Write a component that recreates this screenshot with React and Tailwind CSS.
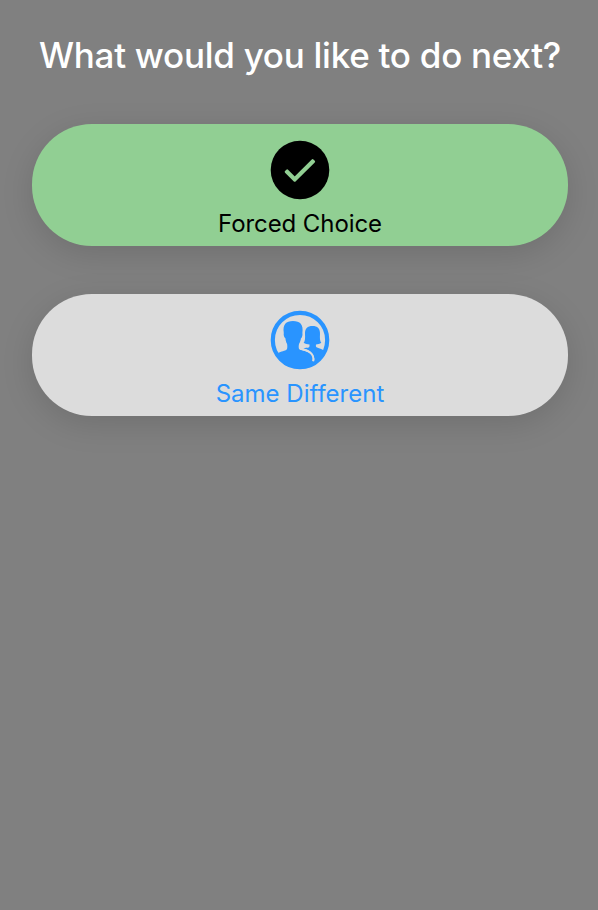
function CheckIcon() {
  return (
    <svg className="block h-[60px] w-[60px]" viewBox="0 0 60 60" fill="none">
      <circle cx="30" cy="30" r="29.3" fill="currentColor" />
      <path
        d="M17.2 30.6L24.7 38L42.6 20.3L43.9 21.6L24.7 40.6L15.9 31.9Z"
        fill="#91cf93"
        stroke="#91cf93"
        strokeWidth="2.4"
        strokeLinejoin="round"
      />
    </svg>
  );
}

function PeopleIcon() {
  return (
    <svg className="block h-[60px] w-[60px]" viewBox="0 0 60 60" fill="none">
      <circle cx="30" cy="30" r="27.2" stroke="currentColor" strokeWidth="4.2" />
      <path
        fill="currentColor"
        d="M8 43C11 41.2 15.2 40.8 16.7 39.4C17.5 38.5 17.4 36 17.1 34C16.1 32.4 15.6 30.6 15.5 28.6C14.3 27.6 13.3 25 13.8 23C12.5 14.5 16 11 23 11C30 11 33.7 14.5 32.4 23C32.8 25.3 32 27.7 30.9 28.6C30.7 30.6 30 32.4 29 34C28.6 36 28.5 38.4 29.3 39.2C32 40.6 38 41.2 41 44C43.3 46 44 49 43.8 51.8L41 57L30 59L15 55Z"
      />
      <path
        fill="currentColor"
        d="M33.2 38.5C35 37.6 38 38 39 37.2C39.5 36.6 39.6 35.6 39.5 34.5C37.5 34.5 35.2 33.9 33.7 32.8C35.2 31.3 35.2 28 35 24C34.8 18.5 37.5 16 42.5 16C47.5 16 50.2 18.5 50 24C49.8 28 49.8 31.3 51.3 32.8C49.8 33.9 47.8 34.5 46 34.5C45.8 35.8 45.8 36.8 46.5 37.3C48.5 38.7 52.5 38.8 54.5 41L53 48L44.4 51C44.8 45 41 39.8 33.2 38.5Z"
      />
      <path d="M30 38.8C38.5 40 44.8 44 43.1 51.3" stroke="#dcdcdc" strokeWidth="2" />
    </svg>
  );
}

function Choice({ icon, label, className }) {
  return (
    <button
      className={`flex h-[122px] w-full flex-col items-center rounded-[60px] pt-4 shadow-[0_8px_32px_rgba(0,0,0,0.13)] ${className}`}
    >
      {icon}
      {label}
    </button>
  );
}

export default function App() {
  return (
    <main className="flex h-[910px] w-full flex-col items-center overflow-hidden bg-[#808080] pr-[30px] pl-8 font-['Inter',sans-serif]">
      <h1 className="mt-8 h-[92px] text-[35px] leading-[46px] font-medium tracking-[-0.27px] whitespace-nowrap text-white">
        What would you like to do next?
      </h1>
      <div className="flex w-full flex-col gap-12">
        <Choice
          icon={<CheckIcon />}
          label={<span className="mt-[7px] text-[24px] leading-[34px] tracking-[-0.08px]">Forced Choice</span>}
          className="bg-[#91cf93] text-black"
        />
        <Choice
          icon={<PeopleIcon />}
          label={<span className="mt-[7px] text-[24px] leading-[34px]">Same Different</span>}
          className="bg-[#dcdcdc] text-[#2994ff]"
        />
      </div>
    </main>
  );
}
